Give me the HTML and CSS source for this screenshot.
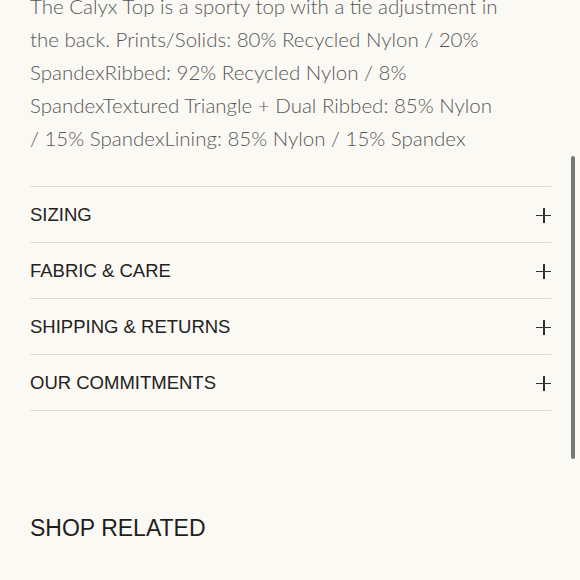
FILE: index.html
```html
<!DOCTYPE html>
<html lang="en">

<head>
    <meta charset="UTF-8">
    <meta name="viewport" content="width=device-width, initial-scale=1.0">
    <title>Calyx Top</title>
    <link rel="stylesheet" href="styles.css">
</head>

<body>
    <div class="product-info">
        <p class="description">
            The Calyx Top is a sporty top with a tie adjustment in<br>
            the back. Prints/Solids: 80% Recycled Nylon / 20%<br>
            SpandexRibbed: 92% Recycled Nylon / 8%<br>
            SpandexTextured Triangle + Dual Ribbed: 85% Nylon<br>
            / 15% SpandexLining: 85% Nylon / 15% Spandex
        </p>

        <!-- accordion -->
        <div class="accordion">
            <div class="accordion-item">
                <span>SIZING</span>
                <span class="plus"></span>
            </div>
            <div class="accordion-item">
                <span>FABRIC &amp; CARE</span>
                <span class="plus"></span>
            </div>
            <div class="accordion-item">
                <span>SHIPPING &amp; RETURNS</span>
                <span class="plus"></span>
            </div>
            <div class="accordion-item">
                <span>OUR COMMITMENTS</span>
                <span class="plus"></span>
            </div>
        </div>

        <h2 class="related-title">SHOP RELATED</h2>
    </div>

    <div class="scroll-indicator"></div>
</body>

</html>
```

FILE: styles.css
```css
body {
    margin: 0;
    background-color: #fbf9f3;
    font-family: "Liberation Sans", Arial, sans-serif;
    overflow: hidden;
}

.product-info {
    padding: 0 29px 0 30px;
}

.description {
    margin: -10px 0 0;
    font-family: Lato, "Open Sans", sans-serif;
    font-weight: 300;
    font-size: 20.5px;
    line-height: 33px;
    color: #575757;
}

.accordion {
    margin-top: 31px;
    border-top: 1px solid #dedbd4;
}

.accordion-item {
    display: flex;
    justify-content: space-between;
    align-items: center;
    box-sizing: border-box;
    height: 56px;
    padding-top: 1px;
    border-bottom: 1px solid #dedbd4;
    font-size: 18.5px;
    color: #222;
}

.plus {
    position: relative;
    width: 15px;
    height: 15px;
}

.plus::before,
.plus::after {
    content: "";
    position: absolute;
    background-color: #333;
}

.plus::before {
    left: 0;
    top: 7px;
    width: 15px;
    height: 1.5px;
}

.plus::after {
    left: 7px;
    top: 0;
    width: 1.5px;
    height: 15px;
}

.related-title {
    margin: 104px 0 0;
    font-weight: normal;
    font-size: 23px;
    color: #1e1e1e;
}

.scroll-indicator {
    position: fixed;
    right: 5px;
    top: 156px;
    width: 4px;
    height: 303px;
    border-radius: 2px;
    background-color: #777;
}
```
